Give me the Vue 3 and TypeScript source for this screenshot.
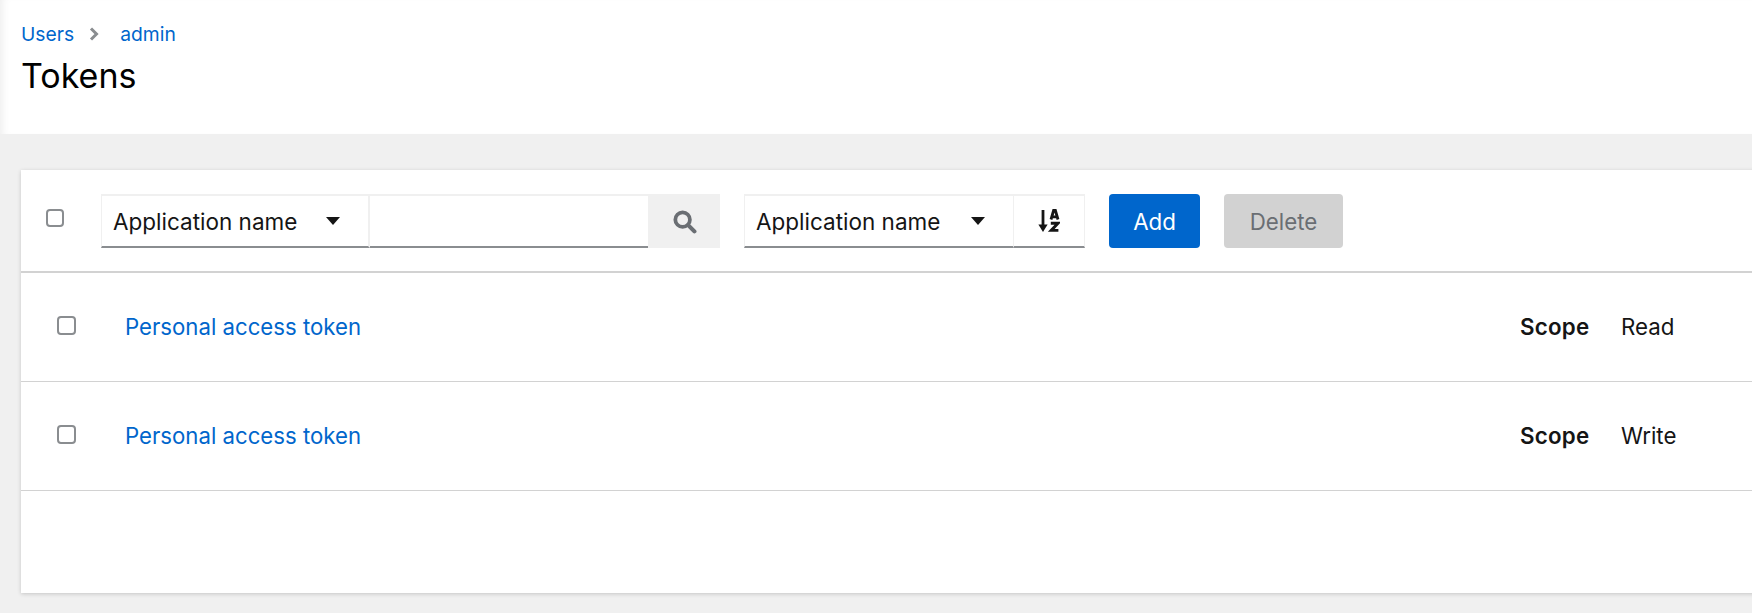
<script setup lang="ts">
const rows = [
  { name: 'Personal access token', scope: 'Read' },
  { name: 'Personal access token', scope: 'Write' },
]
</script>

<template>
  <div class="page">
    <header class="head">
      <nav class="crumbs">
        <a>Users</a>
        <svg class="sep" viewBox="0 0 10 14" width="10" height="14"><path d="M2 1.5 L7.5 7 L2 12.5" fill="none" stroke="#8a8d90" stroke-width="3"/></svg>
        <a>admin</a>
      </nav>
      <h1>Tokens</h1>
    </header>
    <main class="body">
      <section class="card">
        <div class="toolbar">
          <span class="check top"></span>
          <div class="group search">
            <div class="select first"><span>Application name</span><i class="caret"></i></div>
            <div class="field"></div>
            <div class="go">
              <svg viewBox="0 0 24 24" width="25" height="25"><circle cx="10.2" cy="10.2" r="7" fill="none" stroke="#6a6e73" stroke-width="3.6"/><path d="M15.5 15.5 L21.5 21.5" stroke="#6a6e73" stroke-width="4" stroke-linecap="round"/></svg>
            </div>
          </div>
          <div class="group sort">
            <div class="select second"><span>Application name</span><i class="caret"></i></div>
            <div class="az">
              <svg viewBox="0 0 22 24" width="22" height="24">
                <path d="M5 1 V18" stroke="#151515" stroke-width="2.8"/><path d="M0.4 15.5 H9.6 L5 23 Z" fill="#151515"/>
                <path d="M13 10.5 L15.6 1.5 H17.4 L20 10.5 M14.3 7.8 H18.7" fill="none" stroke="#151515" stroke-width="2.8"/>
                <path d="M12.8 14.2 H20 L13.2 21.4 H20.4" fill="none" stroke="#151515" stroke-width="2.9"/>
              </svg>
            </div>
          </div>
          <button class="btn add">Add</button>
          <button class="btn del">Delete</button>
        </div>
        <div v-for="(r, i) in rows" :key="i" class="row">
          <span class="check"></span>
          <a class="name">{{ r.name }}</a>
          <b class="label">Scope</b>
          <span class="value">{{ r.scope }}</span>
        </div>
      </section>
    </main>
  </div>
</template>

<style>
html, body { margin: 0; background: #f0f0f0; overflow: hidden; }
</style>

<style scoped>
.page { width: 1752px; height: 613px; overflow: hidden; font-family: "Inter", "Liberation Sans", sans-serif; color: #151515; font-size: 22.3px; position: relative; }
.head { height: 134px; background: #fff; padding: 20px 0 0 21px; box-sizing: border-box; box-shadow: inset 8px 0 8px -6px rgba(0,0,0,.08); }
.crumbs { display: flex; align-items: center; height: 27px; font-size: 19.3px; color: #06c; }
.sep { margin: 0 21px 0 15px; }
h1 { margin: 7px 0 0; font-size: 34px; font-weight: 400; line-height: 44px; color: #000; }
.body { padding: 36px 0 0 21px; }
.card { width: 1800px; height: 423px; background: #fff; box-shadow: 0 1px 4px rgba(3,3,3,.18); }
.toolbar { height: 103px; box-sizing: border-box; border-bottom: 2px solid #d2d2d2; display: flex; align-items: flex-start; padding-top: 24px; }
.check { width: 19px; height: 19px; box-sizing: border-box; border: 2px solid #8a8d90; border-radius: 4px; background: #fff; flex: none; }
.check.top { width: 18px; height: 18px; margin: 15px 37px 0 25px; }
.group { display: flex; height: 54px; box-sizing: border-box; flex: none; }
.select { display: flex; align-items: center; box-sizing: border-box; height: 54px; padding-left: 11px; border-top: 2px solid #f0f0f0; border-bottom: 2px solid #8a8d90; flex: none; font-size: 22.5px; }
.first { width: 269px; border-left: 1px solid #f0f0f0; border-right: 2px solid #f0f0f0; }
.second { width: 270px; border-left: 1px solid #f0f0f0; border-right: 1px solid #f0f0f0; }
.select span { flex: 1; }
.caret { width: 0; height: 0; border: 7.5px solid transparent; border-top: 8px solid #151515; border-bottom: 0; margin-right: 28px; }
.field { width: 278px; box-sizing: border-box; border-top: 2px solid #f0f0f0; border-bottom: 2px solid #8a8d90; flex: none; }
.go { width: 72px; background: #f0f0f0; display: flex; align-items: center; justify-content: center; flex: none; }
.sort { margin-left: 24px; }
.az { width: 71px; box-sizing: border-box; border-top: 2px solid #f0f0f0; border-right: 1px solid #f0f0f0; border-bottom: 2px solid #8a8d90; display: flex; align-items: center; justify-content: center; flex: none; }
.btn { height: 54px; border: 0; border-radius: 4px; font: inherit; padding: 0; flex: none; }
.add { width: 91px; margin-left: 24px; background: #06c; color: #fff; }
.del { width: 119px; margin-left: 24px; background: #d2d2d2; color: #6a6e73; }
.row { height: 109px; box-sizing: border-box; border-bottom: 1px solid #d2d2d2; display: flex; align-items: center; padding-left: 36px; padding-bottom: 2px; }
.row .check { margin-right: 49px; margin-top: -2px; }
.name { color: #06c; width: 1395px; flex: none; font-size: 22.2px; }
.label { font-weight: 600; width: 101px; flex: none; letter-spacing: .25px; }
.value { font-weight: 400; }
</style>
